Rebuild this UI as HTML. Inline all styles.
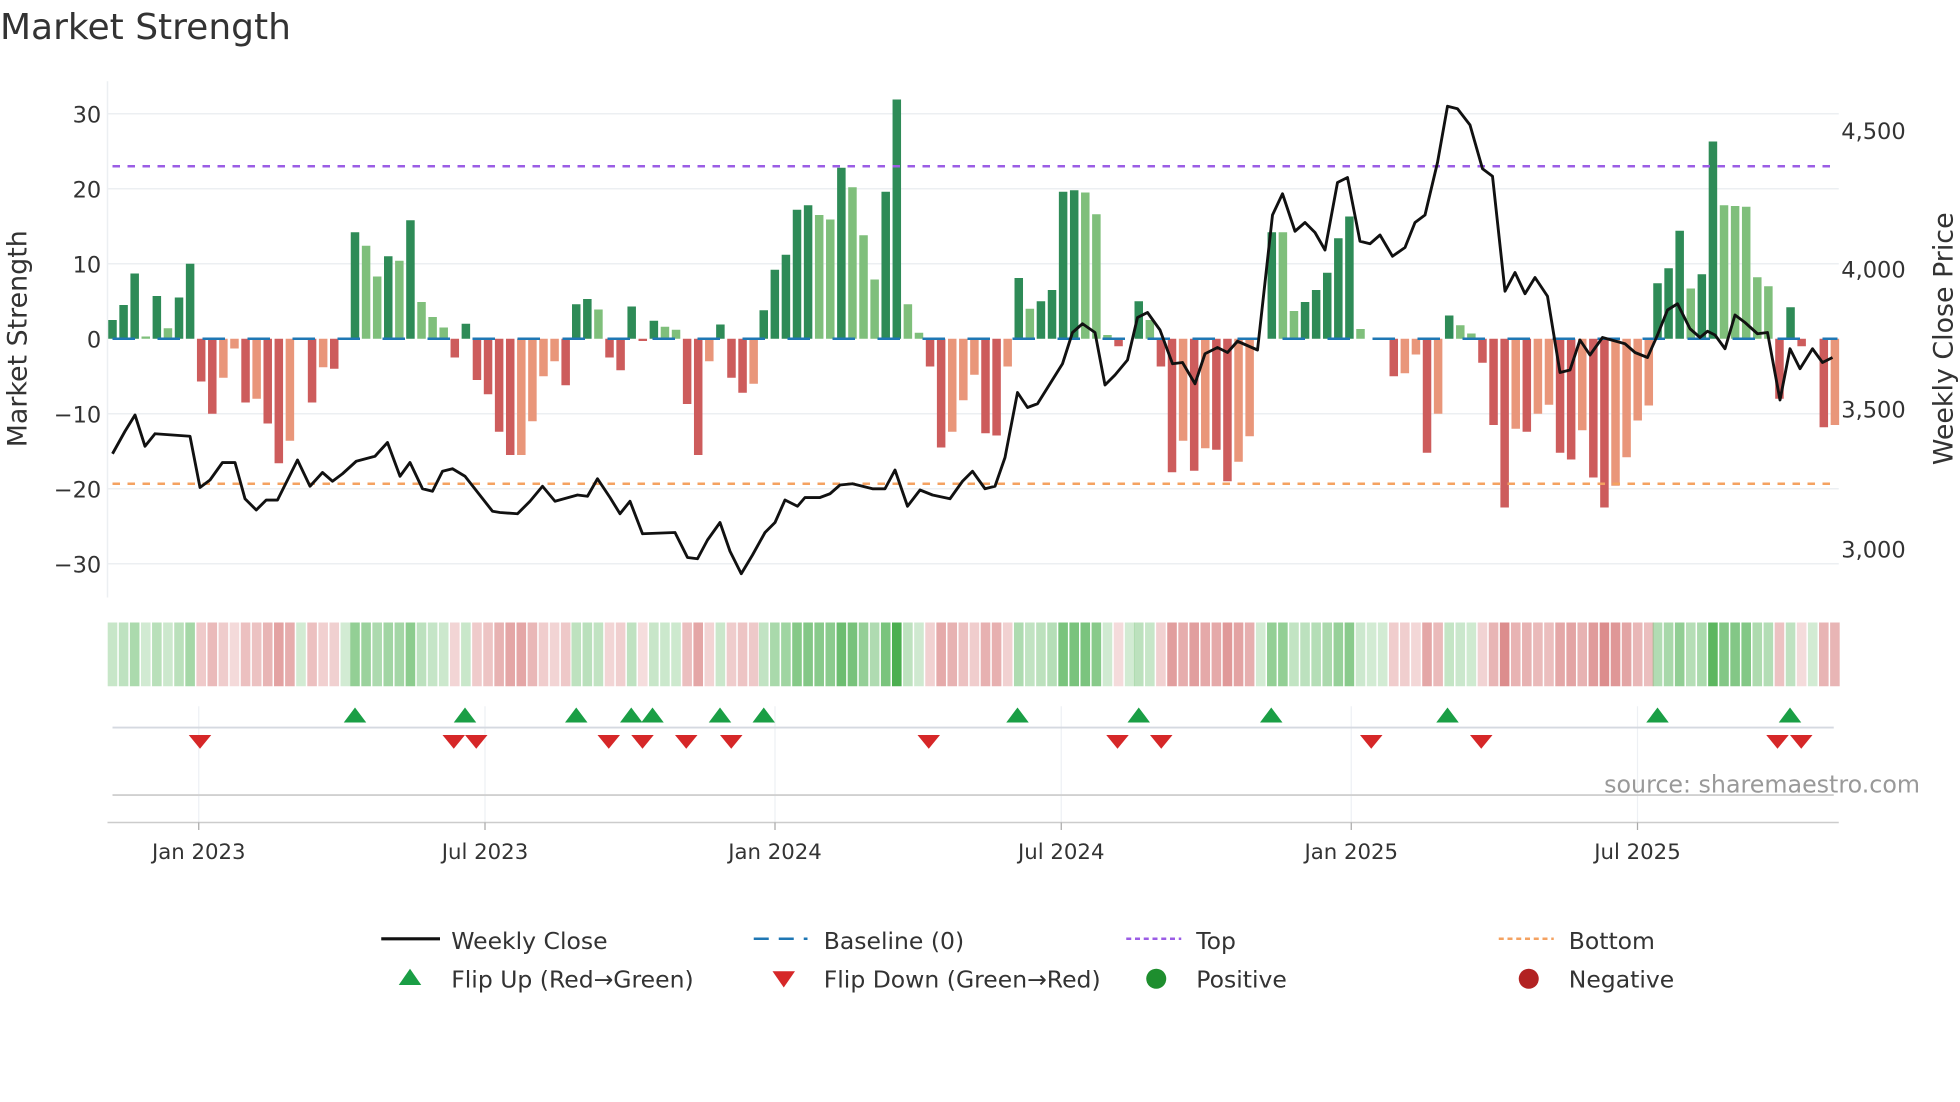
<!DOCTYPE html>
<html><head><meta charset="utf-8"><style>
html,body{margin:0;padding:0;background:#fff;width:1960px;height:1102px;overflow:hidden}
svg{display:block}
text{font-family:"DejaVu Sans","Liberation Sans",sans-serif;fill:#333}
</style></head><body>
<svg id="s" width="1960" height="1102" viewBox="0 0 1568 881.6" xmlns="http://www.w3.org/2000/svg">
<text x="0" y="31" font-size="28.8" fill="#333">Market Strength</text>
<g id="grid" stroke="#eceff2" stroke-width="1.2">
<line x1="86" x2="1471" y1="91" y2="91"/><line x1="86" x2="1471" y1="151" y2="151"/><line x1="86" x2="1471" y1="211" y2="211"/><line x1="86" x2="1471" y1="331" y2="331"/><line x1="86" x2="1471" y1="391" y2="391"/><line x1="86" x2="1471" y1="451" y2="451"/>
<line x1="86" x2="86" y1="65" y2="478"/>
</g>
<g font-size="18" text-anchor="end">
<text x="81" y="98">30</text><text x="81" y="158">20</text><text x="81" y="218">10</text><text x="81" y="278">0</text><text x="81" y="338">−10</text><text x="81" y="398">−20</text><text x="81" y="458">−30</text>
</g>
<g font-size="18">
<text x="1473" y="111">4,500</text><text x="1473" y="222">4,000</text><text x="1473" y="334">3,500</text><text x="1473" y="446">3,000</text>
</g>
<text transform="translate(21,271) rotate(-90)" font-size="21.5" text-anchor="middle">Market Strength</text>
<text transform="translate(1562,271) rotate(-90)" font-size="21.5" text-anchor="middle">Weekly Close Price</text>
<g id="bars"></g>
<line x1="90" x2="1470" y1="271" y2="271" stroke="#1f77b4" stroke-width="2" stroke-dasharray="18,18"/>
<line x1="90" x2="1470" y1="133" y2="133" stroke="#9b5de5" stroke-width="2" stroke-dasharray="6,6"/>
<line x1="90" x2="1470" y1="387" y2="387" stroke="#f4a261" stroke-width="2" stroke-dasharray="6,6"/>
<polyline id="price" fill="none" stroke="#111" stroke-width="2.3" stroke-linejoin="round"/>
<g id="heat"></g>
<g stroke="#eef0f4" stroke-width="1">
<line x1="159" x2="159" y1="565" y2="658"/><line x1="388" x2="388" y1="565" y2="658"/><line x1="620" x2="620" y1="565" y2="658"/><line x1="849" x2="849" y1="565" y2="658"/><line x1="1081" x2="1081" y1="565" y2="658"/><line x1="1310" x2="1310" y1="565" y2="658"/>
</g>
<line x1="90" x2="1467" y1="582" y2="582" stroke="#d5d9e0" stroke-width="1.5"/>
<line x1="90" x2="1467" y1="636" y2="636" stroke="#d0d0d0" stroke-width="1.5"/>
<line x1="86" x2="1471" y1="658" y2="658" stroke="#ccc" stroke-width="1.2"/>
<g id="flips"></g>
<text x="1536" y="634" font-size="19" text-anchor="end" style="fill:#999">source: sharemaestro.com</text>
<g font-size="17" text-anchor="middle">
<text x="159" y="687">Jan 2023</text><text x="388" y="687">Jul 2023</text><text x="620" y="687">Jan 2024</text><text x="849" y="687">Jul 2024</text><text x="1081" y="687">Jan 2025</text><text x="1310" y="687">Jul 2025</text>
</g>
<g stroke="#aaa" stroke-width="1"><line x1="159" x2="159" y1="658" y2="664"/><line x1="388" x2="388" y1="658" y2="664"/><line x1="620" x2="620" y1="658" y2="664"/><line x1="849" x2="849" y1="658" y2="664"/><line x1="1081" x2="1081" y1="658" y2="664"/><line x1="1310" x2="1310" y1="658" y2="664"/></g>
<g font-size="18.8">
<line x1="305" x2="352" y1="751" y2="751" stroke="#111" stroke-width="2.5"/><text x="361" y="759">Weekly Close</text>
<line x1="603" x2="646" y1="751" y2="751" stroke="#1f77b4" stroke-width="2" stroke-dasharray="12,8"/><text x="659" y="759">Baseline (0)</text>
<line x1="901" x2="945" y1="751" y2="751" stroke="#9b5de5" stroke-width="2" stroke-dasharray="4,3"/><text x="957" y="759">Top</text>
<line x1="1199" x2="1243" y1="751" y2="751" stroke="#f4a261" stroke-width="2" stroke-dasharray="4,3"/><text x="1255" y="759">Bottom</text>
<polygon points="319,788 337,788 328,775" fill="#1a9e45"/><text x="361" y="790">Flip Up (Red→Green)</text>
<polygon points="618,777 636,777 627,790" fill="#d62728"/><text x="659" y="790">Flip Down (Green→Red)</text>
<circle cx="925" cy="783" r="8" fill="#1e8e2e"/><text x="957" y="790">Positive</text>
<circle cx="1223" cy="783" r="8" fill="#b22222"/><text x="1255" y="790">Negative</text>
</g>
</svg>
<script>
var NS="http://www.w3.org/2000/svg";
function el(t,a,p){var e=document.createElementNS(NS,t);for(var k in a)e.setAttribute(k,a[k]);p.appendChild(e);return e;}
var G=[
[90,[[2.5,1],[4.5,1],[8.7,1],[0.3,0],[5.7,1],[1.4,0],[5.5,1],[10,1],[-5.7,1],[-10,1],[-5.2,0],[-1.3,0],[-8.5,1],[-8,0],[-11.3,1],[-16.6,1],[-13.6,0],[0,0],[-8.5,1],[-3.8,0],[-4,1],[0,0]]],
[284,[[14.2,1],[12.4,0],[8.3,0],[11,1],[10.4,0],[15.8,1],[4.9,0],[2.9,0],[1.5,0],[-2.5,1],[2,1],[-5.5,1],[-7.4,1],[-12.4,1],[-15.5,1],[-15.5,0],[-11,0],[-5,0],[-3,0],[-6.2,1]]],
[461,[[4.6,1],[5.3,1],[3.9,0],[-2.5,1],[-4.2,1],[4.3,1],[-0.3,1],[2.4,1],[1.6,0],[1.2,0],[-8.7,1],[-15.5,1],[-3,0],[1.9,1],[-5.2,1],[-7.2,1],[-6,0]]],
[611,[[3.8,1],[9.2,1],[11.2,1],[17.2,1],[17.8,1],[16.5,0],[15.9,0],[22.8,1],[20.2,0],[13.8,0],[7.9,0],[19.6,1],[31.9,1],[4.6,0],[0.8,0],
[-3.7,1],[-14.5,1],[-12.4,0],[-8.2,0],[-4.8,0],[-12.6,1],[-12.9,1],[-3.7,0],[8.1,1],[4,0],[5,1],[6.5,1],[19.6,1],[19.8,1],[19.5,0],[16.6,0],[0.5,0],[-1,1],[0,0]]],
[911,[[5,1],[2.5,0],[-3.7,1],[-17.8,1],[-13.6,0],[-17.6,1],[-14.6,0],[-14.8,1],[-19,1],[-16.4,0],[-13,0],[0,0],[14.2,1],[14.2,0],[3.7,0],[4.9,1],[6.5,1],[8.8,1],[13.4,1],[16.3,1],[1.3,0],[0,0],[0,0],
[-5,1],[-4.6,0],[-2.1,0],[-15.2,1],[-10,0],[3.1,1],[1.8,0],[0.7,0],[-3.2,1],[-11.5,1],[-22.5,1],[-12,0],[-12.4,1],[-10,0],[-8.8,0],[-15.2,1],[-16.1,1],[-12.2,0],[-18.5,1],[-22.5,1],[-19.6,0],[-15.8,0],[-10.9,0],[-8.9,0]]],
[1326,[[7.4,1],[9.4,1],[14.4,1],[6.7,0],[8.6,1],[26.3,1],[17.8,0],[17.7,0],[17.6,0],[8.2,0],[7,0],[-8,1],[4.2,1],[-1,1],[0,0],[-11.8,1],[-11.5,0]]]];
var st=8.87;
var bars=document.getElementById('bars'),heat=document.getElementById('heat');
G.forEach(function(g){g[1].forEach(function(b,i){var v=b[0],x=g[0]+i*st,c;
 if(v>=0)c=b[1]?'#2e8b57':'#7fbf7b';else c=b[1]?'#cd5c5c':'#e9967a';
 var h=Math.abs(v)*6;if(h>0)el('rect',{x:x-3.4,y:v>=0?271-h:271,width:6.8,height:h,fill:c},bars);
 var hc=v>=0?'rgba(76,175,80,'+(0.25+Math.abs(v)/40)+')':'rgba(205,92,92,'+(0.2+Math.abs(v)/45)+')';
 el('rect',{x:x-st/2+0.6,y:498,width:st-1.2,height:51,fill:hc},heat);
});});
var P=[[90,363],[100,345],[108,332],[116,357],[124,347],[138,348],[152,349],[160,390],[168,384],[178,370],[188,370],[196,399],[205,408],[213,400],[222,400],[238,368],[248,389],[258,378],[266,385],[274,379],[285,369],[300,365],[310,354],[320,381],[328,370],[338,391],[346,393],[354,377],[362,375],[372,381],[394,409],[400,410],[414,411],[424,401],[434,389],[444,401],[462,396],[470,397],[478,383],[488,398],[496,411],[504,401],[514,427],[540,426],[550,446],[558,447],[566,432],[576,418],[584,441],[593,459],[602,444],[612,426],[620,418],[628,400],[638,405],[644,398],[656,398],[664,395],[672,388],[682,387],[698,391],[708,391],[716,376],[726,405],[736,392],[746,396],[760,399],[770,385],[778,377],[788,391],[796,389],[804,366],[814,314],[822,326],[830,323],[850,291],[858,266],[866,259],[876,266],[884,308],[892,300],[902,288],[910,254],[918,250],[928,264],[938,291],[946,290],[956,307],[964,283],[974,278],[982,282],[990,273],[1006,280],[1018,172],[1026,155],[1036,185],[1044,178],[1052,186],[1060,200],[1070,146],[1078,142],[1088,193],[1096,195],[1104,188],[1114,205],[1124,198],[1132,178],[1140,172],[1150,130],[1158,85],[1166,87],[1176,100],[1186,135],[1194,141],[1204,233],[1212,218],[1220,235],[1228,222],[1238,237],[1248,298],[1256,296],[1264,272],[1272,284],[1282,270],[1300,275],[1308,282],[1318,286],[1326,268],[1334,248],[1342,243],[1352,263],[1360,270],[1366,265],[1372,268],[1380,279],[1388,252],[1396,258],[1406,267],[1414,266],[1424,320],[1432,279],[1440,295],[1450,279],[1458,290],[1466,286]];
document.getElementById('price').setAttribute('points',P.map(function(p){return p.join(',')}).join(' '));
var f=document.getElementById('flips');
[284,372,461,505,522,576,611,814,911,1017,1158,1326,1432].forEach(function(x){el('polygon',{points:(x-9)+',578 '+(x+9)+',578 '+x+',566',fill:'#1a9e45'},f);});
[160,363,381,487,514,549,585,743,894,929,1097,1185,1422,1441].forEach(function(x){el('polygon',{points:(x-9)+',588 '+(x+9)+',588 '+x+',599',fill:'#d62728'},f);});
</script>
</body></html>
